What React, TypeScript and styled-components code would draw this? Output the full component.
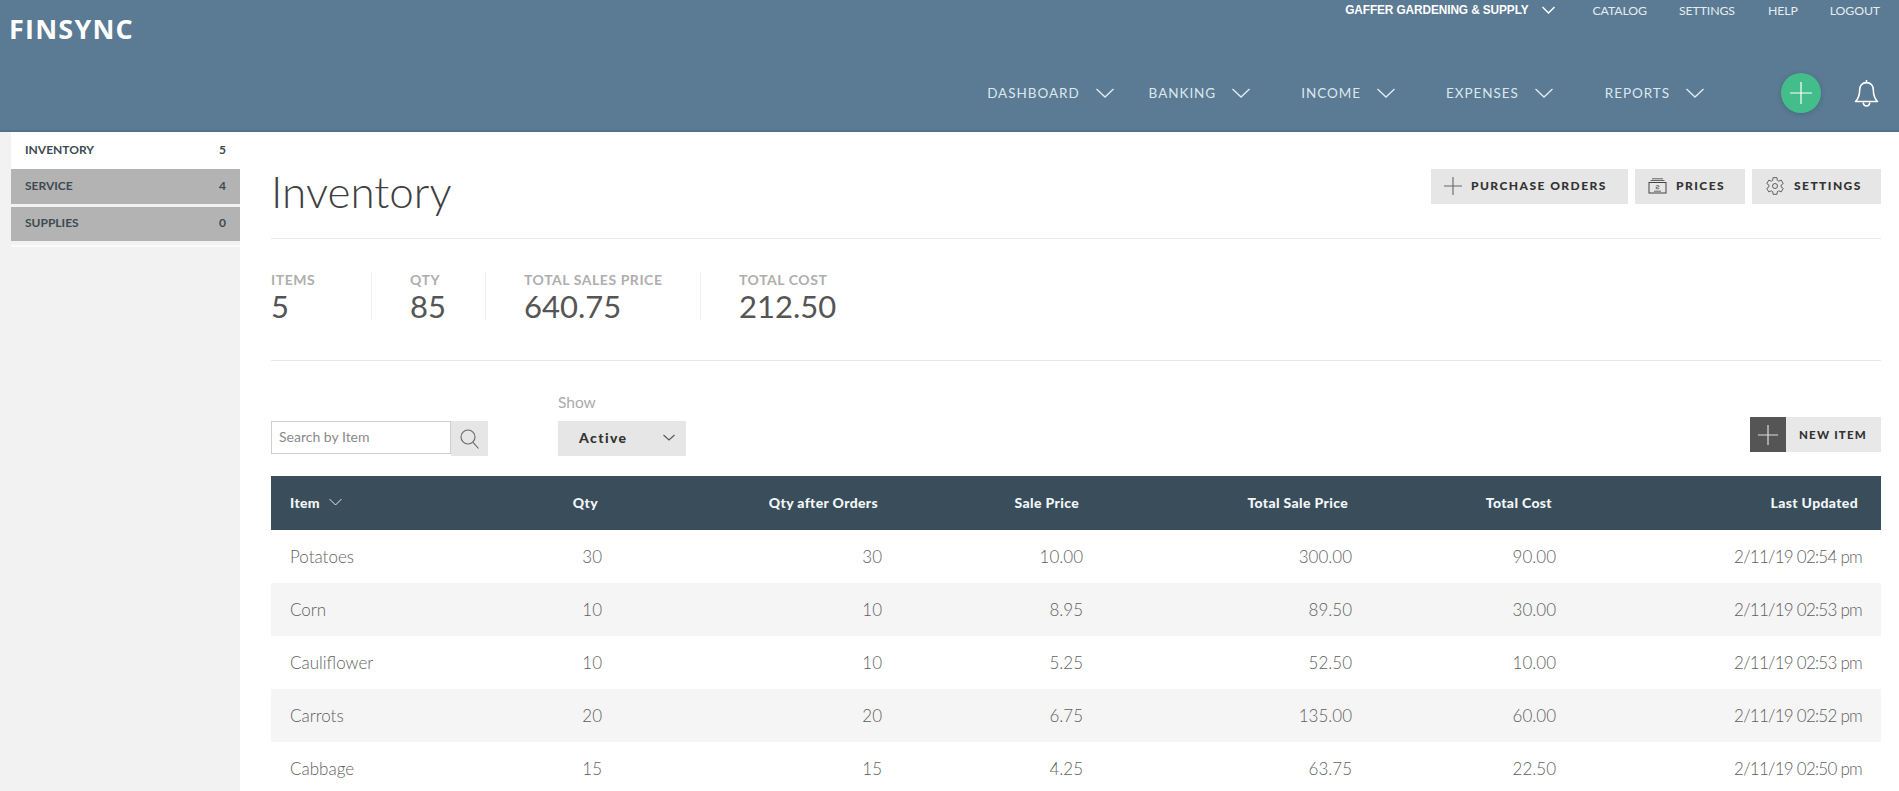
import React from "react";
import styled, { createGlobalStyle } from "styled-components";

const Global = createGlobalStyle`
  html, body { margin: 0; padding: 0; height: 791px; overflow: hidden; background: #fff; }
  body { font-family: Lato, "Open Sans", Arial, sans-serif; }
  * { box-sizing: border-box; }
`;

const Page = styled.div`display: flex; flex-direction: column; width: 1899px; height: 791px; overflow: hidden;`;
const Header = styled.header`
  flex: none; height: 132px; background: #5b7a93; border-bottom: 2px solid #527089;
  display: flex; justify-content: space-between; box-shadow: 0 1px 1px rgba(80,110,130,.25);
`;
const Brand = styled.div`
  font-family: "Open Sans", sans-serif; font-weight: 700; font-size: 27px; line-height: 36px; color: #fff;
  letter-spacing: 1.2px; padding: 11px 0 0 9px;
`;
const HeaderRight = styled.div`display: flex; flex-direction: column; align-items: flex-end; padding-right: 19px;`;
const TopBar = styled.nav`display: flex; align-items: center; height: 20px;`;
const Company = styled.span`font-family: "Liberation Sans", Arial, sans-serif; font-weight: 700; font-size: 11.85px; color: #fff; letter-spacing: -.1px;`;
const CompanyChevron = styled.span`display: flex; margin-left: 13px;`;
const TopLink = styled.a<{ $gap: number }>`
  margin-left: ${p => p.$gap}px; font-size: 12.3px; color: #e4edf2; letter-spacing: -.1px;
`;
const MainNav = styled.nav`display: flex; align-items: center; height: 44px; margin-top: 51px;`;
const NavLink = styled.a<{ $gap: number }>`
  display: flex; align-items: center; gap: 16px; margin-left: ${p => p.$gap}px;
  font-size: 13.5px; color: #dbe8ef; letter-spacing: .95px;
`;
const AddCircle = styled.button`
  width: 40px; height: 40px; border: 0; border-radius: 50%; background: #43bd8a; padding: 0; margin-left: 77px;
  display: flex; align-items: center; justify-content: center; box-shadow: 0 1px 4px rgba(40,70,90,.35);
`;
const BellWrap = styled.span`display: flex; margin-left: 33px; margin-right: 1px;`;

const Body = styled.div`flex: 1; display: flex; min-height: 0;`;
const Sidebar = styled.aside`flex: none; width: 240px; background: #f2f2f2; display: flex; flex-direction: column;`;
const SideItem = styled.div<{ $active?: boolean }>`
  margin-left: 11px; padding: 0 14px ${p => p.$active ? 3 : 2}px 14px; height: ${p => p.$active ? 37 : 34.5}px; margin-bottom: ${p => p.$active ? 0 : 3}px;
  display: flex; align-items: center; justify-content: space-between;
  background: ${p => p.$active ? "#fff" : "#b3b3b3"};
  font-size: 12px; font-weight: 700; color: #3d4a52;
`;
const SideRule = styled.div`margin: 1px 0 0 11px; height: 2px; background: #fafafa;`;

const Main = styled.main`flex: 1; min-width: 0; padding: 0 18px 0 31px; background: #fff;`;
const TitleRow = styled.div`
  height: 107px; border-bottom: 1px solid #e8e8e8; display: flex; justify-content: space-between; padding-top: 36px;
`;
const Title = styled.h1`margin: -4px 0 0; font-weight: 300; font-size: 44px; line-height: 54px; color: #3f3f3f;`;
const Actions = styled.div`display: flex; gap: 7px; align-items: flex-start; margin-top: 1px;`;
const ActionBtn = styled.button<{ $w: number }>`
  width: ${p => p.$w}px; height: 35px; border: 0; background: #e6e6e6; padding: 0 0 2px 13px;
  display: flex; align-items: center; gap: 9px;
  font-family: Lato, sans-serif; font-weight: 900; font-size: 12px; letter-spacing: 1.45px; color: #333;
`;
const StatRow = styled.section`height: 122px; border-bottom: 1px solid #e8e8e8; display: flex; align-items: flex-start; padding-top: 33px;`;
const Stat = styled.div<{ $w: number; $last?: boolean }>`
  width: ${p => p.$w}px; padding-left: ${p => p.$w === 101 ? 0 : 38}px; height: 48px;
  display: flex; flex-direction: column;
  border-right: ${p => p.$last ? "none" : "1px solid #efefef"};
`;
const StatLabel = styled.div`font-size: 14px; line-height: 16px; font-weight: 700; color: #aeaeae; letter-spacing: .55px; white-space: nowrap;`;
const StatValue = styled.div`font-size: 31px; line-height: 34px; font-weight: 400; color: #555; margin-top: 1px;`;

const Toolbar = styled.section`height: 115px; display: flex; align-items: flex-end; padding-bottom: 20px;`;
const SearchBox = styled.div`display: flex; width: 217px;`;
const SearchInput = styled.input`
  width: 180px; height: 33px; border: 1px solid #cfcfcf; background: #fff; padding: 0 7px 2px;
  font-family: Lato, sans-serif; font-size: 14px; outline: 0;
  &::placeholder { color: #8a8a8a; opacity: 1; }
`;
const SearchBtn = styled.button`width: 37px; height: 35px; border: 0; padding: 0; background: #e6e6e6; display: flex; align-items: center; justify-content: center;`;
const ShowGroup = styled.div`margin-left: 70px; display: flex; flex-direction: column;`;
const ShowLabel = styled.div`font-size: 15.5px; line-height: 18px; color: #aaa; margin-bottom: 10px;`;
const Select = styled.div`
  width: 128px; height: 35px; background: #e6e6e6; display: flex; align-items: center; justify-content: space-between;
  padding: 0 11px 2px 21px; font-weight: 900; font-size: 14px; letter-spacing: 1.4px; color: #333;
`;
const NewItem = styled.button`
  margin-left: auto; margin-bottom: 4px; height: 35px; width: 131px; border: 0; padding: 0; background: #e8e8e8;
  display: flex; align-items: center; gap: 13px;
  font-family: Lato, sans-serif; font-weight: 900; font-size: 11.5px; letter-spacing: 1.2px; color: #333;
`;
const PlusBox = styled.span`width: 36px; height: 35px; background: #555; display: flex; align-items: center; justify-content: center;`;

const cols = "179px 133px 280px 201px 269px 204px 306px";
const TableHead = styled.div`
  display: grid; grid-template-columns: ${cols}; align-items: center; height: 54px; padding: 0 0 2px 19px;
  background: #394d5a; color: #f2f6f8; font-size: 14px; font-weight: 900; letter-spacing: .35px;
`;
const HeadCell = styled.div<{ $left?: boolean }>`
  display: flex; align-items: center; gap: 9px; justify-content: ${p => p.$left ? "flex-start" : "flex-end"};
  padding-right: ${p => p.$left ? 0 : 4}px; white-space: nowrap;
`;
const Row = styled.div<{ $alt: boolean }>`
  display: grid; grid-template-columns: ${cols}; align-items: center; height: 53px; padding: 0 0 1px 19px;
  background: ${p => p.$alt ? "#f5f5f5" : "#fff"}; color: #5f5f5f; font-size: 17px; font-weight: 300;
`;
const Cell = styled.div<{ $left?: boolean }>`text-align: ${p => p.$left ? "left" : "right"}; white-space: nowrap;`;
const DateCell = styled(Cell)`letter-spacing: -.75px;`;

const Chevron = ({ w = 18, h = 9, color = "#e4edf2", sw = 1.3 }: { w?: number; h?: number; color?: string; sw?: number }) => (
  <svg width={w} height={h + 2} viewBox={`0 0 ${w} ${h + 2}`} fill="none">
    <path d={`M0.5 1 L${w / 2} ${h} L${w - 0.5} 1`} stroke={color} strokeWidth={sw} />
  </svg>
);
const Plus = ({ s = 22, color = "#fff", sw = 1.2 }: { s?: number; color?: string; sw?: number }) => (
  <svg width={s} height={s} viewBox={`0 0 ${s} ${s}`} fill="none">
    <path d={`M${s / 2} 0V${s}M0 ${s / 2}H${s}`} stroke={color} strokeWidth={sw} />
  </svg>
);
const Bell = () => (
  <svg width="25" height="29" viewBox="0 0 24 28" fill="none" stroke="#fff" strokeWidth="1.5">
    <path d="M12 3.5c-4.4 0-6.6 3.2-6.6 7.2 0 5-1 8-4 11h21.2c-3-3-4-6-4-11 0-4-2.2-7.2-6.6-7.2z" strokeLinejoin="round" />
    <path d="M12 1v2.5" />
    <path d="M8.8 22.5c.3 2.200 1.600 3.500 3.200 3.500s2.900-1.300 3.200-3.500" />
  </svg>
);
const Bill = () => (
  <svg width="19" height="16" viewBox="0 0 19 16" fill="none" stroke="#444" strokeWidth="1">
    <rect x="1" y="4.5" width="17" height="10.5" />
    <path d="M2.5 2.5H16.5M4 .8H15" strokeWidth=".8" />
    <path d="M6 13.2H13M7.8 8.3c0-1 3.400-1 3.400 0 0 1-3.400.8-3.400 1.800 0 1 3.400 1 3.400 0" strokeWidth=".8" />
  </svg>
);
const Gear = () => (
  <svg width="20" height="20" viewBox="0 0 24 24" fill="none" stroke="#555" strokeWidth="1.1" strokeLinejoin="round">
    <path d="M9.67 22l-.4-3.2a7.5 7.5 0 0 1-1.7-1l-3 1.3-2.4-4.2 2.6-1.9a7 7 0 0 1 0-2l-2.6-1.9 2.4-4.2 3 1.3a7.500 7.500 0 0 1 1.7-1l.4-3.200h4.700l.4 3.200a7.500 7.500 0 0 1 1.700 1l3-1.300 2.400 4.200-2.600 1.900a7 7 0 0 1 0 2l2.600 1.900-2.400 4.200-3-1.300a7.500 7.500 0 0 1-1.700 1l-.4 3.200z" />
    <circle cx="12" cy="12" r="3" />
  </svg>
);
const SearchIcon = () => (
  <svg width="19" height="20" viewBox="0 0 19 20" fill="none" stroke="#666" strokeWidth="1.1">
    <circle cx="8" cy="8" r="7" />
    <path d="M13 13.3L18.5 19.5" />
  </svg>
);

const topLinks: [string, number][] = [["CATALOG", 38], ["SETTINGS", 32], ["HELP", 33], ["LOGOUT", 32]];
const navLinks: [string, number][] = [["DASHBOARD", 0], ["BANKING", 35], ["INCOME", 51], ["EXPENSES", 51], ["REPORTS", 52]];
const side: [string, number][] = [["INVENTORY", 5], ["SERVICE", 4], ["SUPPLIES", 0]];
const stats: [string, string, number][] = [["ITEMS", "5", 101], ["QTY", "85", 114], ["TOTAL SALES PRICE", "640.75", 215], ["TOTAL COST", "212.50", 300]];
const heads = ["Qty", "Qty after Orders", "Sale Price", "Total Sale Price", "Total Cost", "Last Updated"];
const rows = [
  ["Potatoes", "30", "30", "10.00", "300.00", "90.00", "2/11/19 02:54 pm"],
  ["Corn", "10", "10", "8.95", "89.50", "30.00", "2/11/19 02:53 pm"],
  ["Cauliflower", "10", "10", "5.25", "52.50", "10.00", "2/11/19 02:53 pm"],
  ["Carrots", "20", "20", "6.75", "135.00", "60.00", "2/11/19 02:52 pm"],
  ["Cabbage", "15", "15", "4.25", "63.75", "22.50", "2/11/19 02:50 pm"],
];

export default function App() {
  return (
    <Page>
      <Global />
      <Header>
        <Brand>FINSYNC</Brand>
        <HeaderRight>
          <TopBar>
            <Company>GAFFER GARDENING &amp; SUPPLY</Company>
            <CompanyChevron><Chevron w={13} h={7} color="#fff" sw={1.5} /></CompanyChevron>
            {topLinks.map(([t, g]) => <TopLink key={t} $gap={g}>{t}</TopLink>)}
          </TopBar>
          <MainNav>
            {navLinks.map(([t, g]) => <NavLink key={t} $gap={g}>{t}<Chevron /></NavLink>)}
            <AddCircle><Plus /></AddCircle>
            <BellWrap><Bell /></BellWrap>
          </MainNav>
        </HeaderRight>
      </Header>
      <Body>
        <Sidebar>
          {side.map(([t, n], i) => <SideItem key={t} $active={i === 0}><span>{t}</span><span>{n}</span></SideItem>)}
          <SideRule />
        </Sidebar>
        <Main>
          <TitleRow>
            <Title>Inventory</Title>
            <Actions>
              <ActionBtn $w={197}><Plus s={18} color="#666" sw={1.1} />PURCHASE ORDERS</ActionBtn>
              <ActionBtn $w={110}><Bill />PRICES</ActionBtn>
              <ActionBtn $w={129}><Gear />SETTINGS</ActionBtn>
            </Actions>
          </TitleRow>
          <StatRow>
            {stats.map(([l, v, w], i) => (
              <Stat key={l} $w={w} $last={i === 3}><StatLabel>{l}</StatLabel><StatValue>{v}</StatValue></Stat>
            ))}
          </StatRow>
          <Toolbar>
            <SearchBox>
              <SearchInput placeholder="Search by Item" />
              <SearchBtn><SearchIcon /></SearchBtn>
            </SearchBox>
            <ShowGroup>
              <ShowLabel>Show</ShowLabel>
              <Select>Active<Chevron w={12} h={6} color="#555" sw={1.1} /></Select>
            </ShowGroup>
            <NewItem><PlusBox><Plus s={20} color="#ddd" sw={1.2} /></PlusBox>NEW ITEM</NewItem>
          </Toolbar>
          <TableHead>
            <HeadCell $left>Item <Chevron w={13} h={7} color="#dfe7ec" sw={1} /></HeadCell>
            {heads.map(h => <HeadCell key={h}>{h}</HeadCell>)}
          </TableHead>
          {rows.map((r, i) => (
            <Row key={r[0]} $alt={i % 2 === 1}>
              {r.map((c, j) => j === 6 ? <DateCell key={j}>{c}</DateCell> : <Cell key={j} $left={j === 0}>{c}</Cell>)}
            </Row>
          ))}
        </Main>
      </Body>
    </Page>
  );
}
